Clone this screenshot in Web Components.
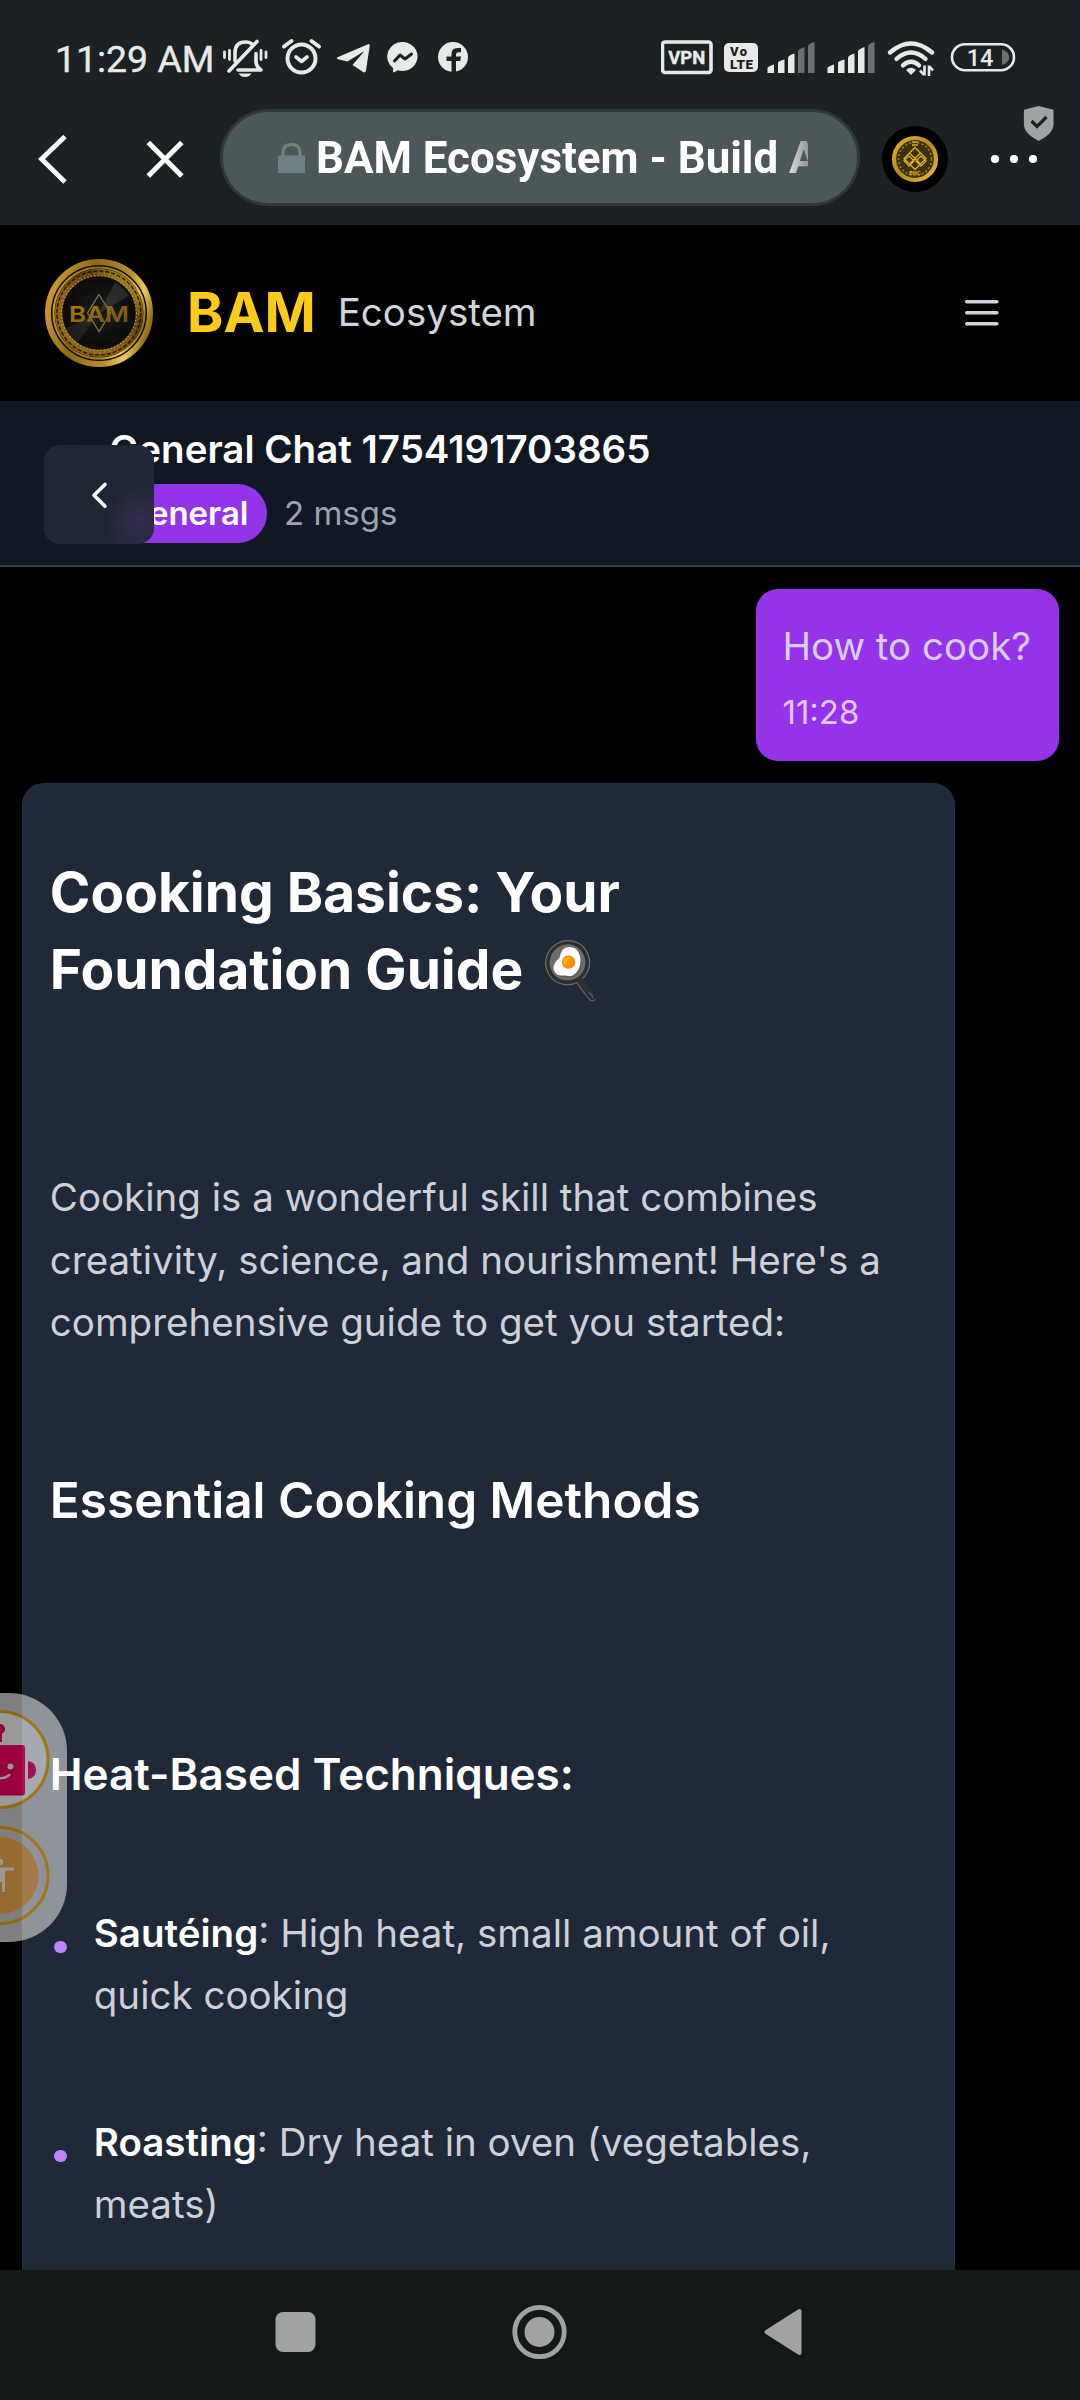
<!DOCTYPE html>
<html lang="en">
<head>
<meta charset="utf-8">
<title>BAM Ecosystem - Build AI</title>
<style>
html,body{margin:0;background:#000}
body{width:1080px;height:2400px;overflow:hidden;font-family:Inter,"Noto Sans",sans-serif}
</style>
</head>
<body>
<phone-screen></phone-screen>
<script>
const define=(name,html)=>customElements.define(name,class extends HTMLElement{
  constructor(){super();this.attachShadow({mode:'open'}).innerHTML=html;}
});

/* glyph art; the first value of each entry is the viewBox */
const ICONS={
bell:['222 28 54 56',`<g fill="none" stroke="#e8e9e9" stroke-width="3.6" stroke-linecap="round" stroke-linejoin="round"><path d="M235 61V53q0-11 10.500-11 5 0 7.500 3"/><path d="M229 71L257 41.500"/><path d="M238 70H261q-4.500-3-5-8V53.500"/><path d="M224.500 52v5.500M229.500 50.500v9M261 50.500v9M266 52v5.500" stroke-width="2.800"/></g><path d="M238.500 73.500h13q-2.500 3.500-6.500 3.500t-6.500-3.500z" fill="#e8e9e9"/>`],
alarm:['276 28 54 56',`<g fill="none" stroke="#e8e9e9" stroke-width="4" stroke-linecap="round"><circle cx="301.500" cy="58.500" r="14"/><path d="M284 46.500l7.500-5.500M311.500 41l7.500 5.500"/><path d="M296 57l5.500 4.500 5.500-4.500" stroke-linejoin="round" stroke-width="3.600"/></g>`],
telegram:['330 28 50 56',`<path d="M337 57.500L368 44.200q2-.6 1.700 1.800L366 70.500q-.7 3-3.300 1.300L352.500 65l12-14-17 10.500-9.500-2.300q-2-.8-1-1.700z" fill="#e8e9e9"/>`],
messenger:['380 28 50 56',`<path d="M403.300 42a15.200 14.500 0 1 1-5.500 28.300l-3.600 2q-1 .5-1-.8l-.1-3.500A15 14.500 0 0 1 403.300 42z" fill="#e8e9e9"/><path d="M394.500 61l5.500-6 5 4 6.500-5" fill="none" stroke="#1c2123" stroke-width="3" stroke-linejoin="round" stroke-linecap="round"/>`],
facebook:['430 28 231 56',`<circle cx="453" cy="57" r="15" fill="#e8e9e9"/><path d="M451.500 73V61h-5v-4.500h5V54q0-6 6-6h3.500v4.200h-2.500q-2.500 0-2.500 2.300v2h5l-.8 4.500H456V73z" fill="#1c2123"/>`],
vpn:['661 28 58 56',`<rect x="662.500" y="42" width="48.500" height="30.500" rx="2.500" fill="none" stroke="#e8e9e9" stroke-width="3.600"/><text x="686.800" y="63.500" text-anchor="middle" font-family="Roboto" font-weight="700" font-size="19" fill="#e8e9e9" stroke="#e8e9e9" stroke-width=".4" textLength="37" lengthAdjust="spacingAndGlyphs">VPN</text>`],
volte:['719 28 45 56',`<rect x="724" y="43" width="34" height="29" rx="5" fill="#e8e9e9"/><text x="730" y="55.800" font-family="Roboto" font-weight="900" font-size="13" fill="#1c2123" textLength="17">Vo</text><text x="730" y="69" font-family="Roboto" font-weight="900" font-size="13.500" fill="#1c2123" textLength="23">LTE</text>`],
signal3:['764 28 60 56',`<g fill="#e8e9e9"><path d="M767.500 73v-5q0-1.500 6.500-3.500v8.500z"/><path d="M778 73V62.500q1-1.500 6.500-3V73z"/><path d="M788 73V57.500q1-2.500 6.500-4V73z"/></g><g fill="#6c6f70"><path d="M798 73V51q1-2 6.500-4V73z"/><path d="M808 73V46q1-2.500 6.500-4V73z"/></g>`],
signal4:['824 28 60 56',`<g fill="#e8e9e9"><path d="M827.500 73v-5q0-1.500 6.500-3.500v8.500z"/><path d="M838 73V62.500q1-1.500 6.500-3V73z"/><path d="M848 73V57.500q1-2.500 6.500-4V73z"/><path d="M858 73V51q1-2 6.500-4V73z"/></g><g fill="#6c6f70"><path d="M868 73V46q1-2.500 6.500-4V73z"/></g>`],
wifi:['884 28 60 56',`<g fill="none" stroke="#e8e9e9" stroke-width="4.400" stroke-linecap="round"><path d="M890 52.500q21-18 42 0"/><path d="M896.500 58.800q14.500-12.500 29 0"/><path d="M903 65.300q8-7 16 0"/></g><path d="M906 70q5-4.500 10 0l-5 5z" fill="#e8e9e9"/><path d="M924.500 65.500v10M920 70.500l4 4.300M929 76V65.500M933 70.500l-3.500-4" stroke="#e8e9e9" stroke-width="2.600" fill="none"/>`],
battery:['944 28 80 56',`<rect x="952" y="44.200" width="62" height="26" rx="13" fill="none" stroke="#e8e9e9" stroke-width="2.600"/><path d="M1002 49.500q7 2 7 7.700t-7 7.700z" fill="#6c6f70"/><text x="980" y="66" text-anchor="middle" font-family="Roboto" font-weight="500" font-size="23.500" fill="#e8e9e9">14</text>`],
back:['20 96 107 129',`<path d="M65 136.500L41.500 159l23.500 23" fill="none" stroke="#fff" stroke-width="4.800"/>`],
close:['127 96 93 129',`<path d="M148.300 142.500l33.500 33.500M181.800 142.500l-33.500 33.500" stroke="#fff" stroke-width="5"/>`],
lock:['276 140 32 36',`<path d="M278 155.500h27v17.500h-27z" fill="#6f8183"/><path d="M283 156v-3q0-8.700 8.500-8.700t8.500 8.700v3" fill="none" stroke="#6f8183" stroke-width="3.200"/>`],
site:['880 124 70 70',`<defs><linearGradient id="g" x1="0" y1="0" x2="1" y2="1"><stop offset="0" stop-color="#e0b21c"/><stop offset=".5" stop-color="#b88a18"/><stop offset="1" stop-color="#e9b93f"/></linearGradient></defs><circle cx="915" cy="159" r="33" fill="#000"/><circle cx="915" cy="159" r="21" fill="#3a310c" stroke="url(#g)" stroke-width="4.200"/><circle cx="915" cy="159" r="16.500" fill="none" stroke="#a8841c" stroke-width="1.500" stroke-dasharray="2 2.200"/><g fill="none" stroke="#d9ae24" stroke-width="1.300"><path d="M915 147.500l11 11-11 11-11-11z"/><path d="M909.500 153l11 11M920.500 153l-11 11M904 160.500l5-4.500 5 5-5 5zM916 161l5-5 5 5-5 5z"/><path d="M912 145h6M912 142h6"/></g><text x="915" y="175" text-anchor="middle" font-family="Roboto" font-weight="700" font-size="6" fill="#d9ae24">BNC</text>`],
more:['986 96 94 129',`<g fill="#fff"><circle cx="995" cy="159" r="4.100"/><circle cx="1014" cy="159" r="4.100"/><circle cx="1033" cy="159" r="4.100"/></g><path d="M1038.700 106l14.800 3.800V125q0 8.500-14.800 16-14.800-7.500-14.800-16v-15.200z" fill="#a0a3a4"/><path d="M1031.500 121l5.500 5.500 9.500-9.500" fill="none" stroke="#1c2123" stroke-width="3.200"/>`],
menu:['960 290 44 46',`<path d="M966.800 301.800h30M966.800 312.800h30M966.800 323.800h30" stroke="#d1d5db" stroke-width="3.600" stroke-linecap="round"/>`],
chevron:['85 480 28 30',`<path d="M105 484.500L94 495.200l11 11" fill="none" stroke="#fff" stroke-width="3.600" stroke-linecap="round" stroke-linejoin="round"/>`],
recent:['265 2300 60 64',`<rect x="275.500" y="2312" width="40" height="40" rx="7.500" fill="#a0a3a2"/>`],
home:['510 2300 60 64',`<circle cx="539.500" cy="2332" r="24.700" fill="none" stroke="#a0a3a2" stroke-width="4.800"/><circle cx="539.500" cy="2332" r="15" fill="#a0a3a2"/>`],
navback:['755 2300 60 64',`<path d="M766.500 2332L799.500 2311v42z" fill="#a0a3a2" stroke="#a0a3a2" stroke-width="4" stroke-linejoin="round"/>`],
coin:['44 258 110 110',`<defs>
<linearGradient id="rim" x1="0" y1=".3" x2="1" y2=".6"><stop offset="0" stop-color="#c99a33"/><stop offset=".35" stop-color="#8d6b14"/><stop offset=".7" stop-color="#b98f2a"/><stop offset=".86" stop-color="#efc860"/><stop offset="1" stop-color="#927014"/></linearGradient>
<linearGradient id="mid" x1="0" y1="1" x2="1" y2="0"><stop offset="0" stop-color="#8a6c10"/><stop offset=".4" stop-color="#8b5a0c"/><stop offset=".7" stop-color="#5a3c08"/><stop offset="1" stop-color="#e2b416"/></linearGradient>
<linearGradient id="txt" x1="0" y1="0" x2="1" y2="1"><stop offset="0" stop-color="#b87e10"/><stop offset="1" stop-color="#6d5012"/></linearGradient>
<radialGradient id="disc"><stop offset="0" stop-color="#1b1b1b"/><stop offset="1" stop-color="#0d0c0a"/></radialGradient></defs>
<circle cx="99" cy="313" r="51" fill="#0e0b03" stroke="url(#rim)" stroke-width="6"/>
<circle cx="99" cy="313" r="45.500" fill="none" stroke="url(#rim)" stroke-width="2"/>
<circle cx="99" cy="313" r="40.500" fill="none" stroke="url(#mid)" stroke-width="7.500"/>
<circle cx="99" cy="313" r="39.500" fill="none" stroke="#9c9674" stroke-opacity=".75" stroke-width="1" stroke-dasharray="2 3"/>
<circle cx="99" cy="313" r="42" fill="none" stroke="#1a1303" stroke-width="1.300" stroke-dasharray="4 2"/>
<circle cx="99" cy="313" r="37.500" fill="none" stroke="#c9b05a" stroke-opacity=".7" stroke-width="1.400" stroke-dasharray="1.500 2"/>
<circle cx="99" cy="313" r="36" fill="url(#disc)"/>
<path d="M99 313L115 282q10 6 14 14z" fill="#fff" fill-opacity=".11"/><path d="M99 313L78 342q-8-6-12-14z" fill="#fff" fill-opacity=".07"/>
<path d="M99 294.500l11.500 18.500L99 331.500 87.500 313z" fill="none" stroke="#8d7547" stroke-width="1.200"/>
<text x="99" y="321.500" text-anchor="middle" font-family="Inter" font-weight="600" font-size="22" fill="url(#txt)" textLength="60" lengthAdjust="spacingAndGlyphs">BAM</text>`]
};
customElements.define('ui-icon',class extends HTMLElement{
  constructor(){super();this.attachShadow({mode:'open'});}
  connectedCallback(){
    const [box,art]=ICONS[this.getAttribute('name')];const [,,w,h]=box.split(' ');
    this.shadowRoot.innerHTML=`<style>:host{display:block;flex:none;width:${w}px;height:${h}px}svg{display:block}</style><svg width="${w}" height="${h}" viewBox="${box}">${art}</svg>`;
  }
});

define('status-bar',`<style>:host{display:flex;height:56px;padding:28px 0 12px 55px;background:#1c2123;color:#e8e9e9;font:400 37.4px/56px Roboto,sans-serif}
.t{width:167px;white-space:nowrap;padding-top:3px;box-sizing:border-box;height:56px;-webkit-text-stroke:.4px #e8e9e9}</style>
<div class="t">11:29 AM</div>${['bell','alarm','telegram','messenger','facebook','vpn','volte','signal3','signal4','wifi','battery'].map(n=>`<ui-icon name="${n}"></ui-icon>`).join('')}`);

define('browser-bar',`<style>:host{display:flex;height:129px;padding-left:20px;background:#1c2123;font-family:Roboto,sans-serif}
.pill{box-sizing:border-box;width:640px;height:97px;margin-top:13px;border:3px solid #2d393b;border-radius:49px;background:#4c5759;display:flex;align-items:center;padding-left:53px}
.title{width:492px;margin-left:8px;overflow:hidden;white-space:nowrap;color:#fff;font-weight:700;font-size:43.9px;line-height:60px;-webkit-mask-image:linear-gradient(90deg,#000 94%,transparent 104%);mask-image:linear-gradient(90deg,#000 94%,transparent 104%)}
.site{margin:28px 36px 0 20px}</style>
<ui-icon name="back"></ui-icon><ui-icon name="close"></ui-icon>
<div class="pill"><ui-icon name="lock"></ui-icon><div class="title"><slot></slot></div></div>
<ui-icon class="site" name="site"></ui-icon><ui-icon name="more"></ui-icon>`);

define('site-header',`<style>:host{display:flex;box-sizing:border-box;height:176px;padding:0 76px 0 44px;align-items:center;background:#000}
.b{color:#facc15;font-weight:700;font-size:55px;line-height:77px;margin:0 0 2px 33px}
.e{color:#d1d5db;font-size:38.5px;line-height:55px;margin:0 0 1px 22px}.m{margin-left:auto}</style>
<ui-icon name="coin"></ui-icon><span class="b">BAM</span><span class="e">Ecosystem</span><ui-icon class="m" name="menu"></ui-icon>`);

define('back-button',`<style>:host{box-sizing:border-box;width:110px;height:99px;border-radius:16px;background:radial-gradient(circle at 96px 76px,#342d4d 0,rgba(52,45,77,0) 36px),linear-gradient(100deg,#202833,#1e2633 60%,#222938);display:flex;align-items:center;justify-content:center}</style><ui-icon name="chevron"></ui-icon>`);

define('chat-header',`<style>:host{display:block;position:relative;box-sizing:border-box;height:166px;padding:21px 0 0 109.500px;background:#111824;border-bottom:2px solid #374151}
.h{color:#fff;font-weight:600;font-size:38.5px;line-height:55px;white-space:nowrap}
.r{display:flex;align-items:center;margin-top:7px;gap:17px}
.badge{box-sizing:border-box;height:59px;border-radius:30px;background:#9333ea;color:#fff;font-weight:600;font-size:33px;line-height:59px;padding:0 18.500px;width:157.500px;display:flex;justify-content:flex-end}
.n{color:#9ca3af;font-size:33px;line-height:59px}
back-button{position:absolute;left:44px;top:44px}</style>
<div class="h">General Chat 1754191703865</div><div class="r"><span class="badge">General</span><span class="n">2 msgs</span></div><back-button></back-button>`);

define('user-bubble',`<style>:host{display:block;box-sizing:border-box;width:303.500px;height:172px;margin:22px 21px 22px auto;padding:26px 0 0 27px;border-radius:22px;background:#9333ea;color:#d9cdf0;font-size:38.5px;line-height:62.500px;white-space:nowrap}
.t{font-size:33px;line-height:44px;color:#e5c8fd;margin-top:12px}</style><slot></slot><div class="t"><slot name="time"></slot></div>`);

define('step-item',`<style>:host{display:grid;grid-template-columns:44px 1fr;height:209px;font-size:38.5px;line-height:62.560px;color:#ccd0d8}
i{width:12.500px;height:12.500px;border-radius:50%;background:#c084fc;margin:39px 0 0 4.500px}::slotted(b){color:#fff;font-weight:600}</style><i></i><div><slot></slot></div>`);

define('answer-card',`<style>:host{display:block;box-sizing:border-box;width:932.500px;height:1487px;margin-left:22px;padding:70px 26px 0 26.800px;border:1px solid #243040;border-bottom:0;border-radius:22px 22px 0 0;background:#202937;color:#ccd0d8;font-size:38.5px;line-height:62.560px;overflow:hidden}
h1,h2,h3,p{margin:0}h1,h2,h3{color:#fff}
h1{font-size:55px;line-height:77px;font-weight:700;height:154px}
p{margin-top:158.200px;height:187.300px;white-space:nowrap}
h2{font-size:49.500px;line-height:69px;font-weight:600;margin-top:112.500px}
h3{font-size:44px;line-height:62px;font-weight:600;margin-top:208px}
.l{margin-top:96.700px}</style>
<h1>Cooking Basics: Your<br>Foundation Guide 🍳</h1>
<p>Cooking is a wonderful skill that combines<br>creativity, science, and nourishment! Here's a<br>comprehensive guide to get you started:</p>
<h2>Essential Cooking Methods</h2>
<h3>Heat-Based Techniques:</h3>
<div class="l"><step-item><b>Sautéing</b>: High heat, small amount of oil,<br>quick cooking</step-item>
<step-item><b>Roasting</b>: Dry heat in oven (vegetables,<br>meats)</step-item></div>`);

define('side-widget',`<style>:host{display:block;width:66.500px;height:248.500px;border-radius:0 58px 58px 0;overflow:hidden;background:rgba(255,255,255,.83);opacity:.6}svg{display:block}</style>
<svg width="67" height="249" viewBox="0 1693 67 249"><circle cx="0" cy="1759.500" r="48" fill="#fff" stroke="#eeae12" stroke-width="3.200"/>
<g fill="#ff0064"><rect x="-28" y="1745" width="53" height="50.500" rx="3"/><path d="M28 1761q8 1 8 9t-8 9z"/><circle cx="0" cy="1729" r="5"/><path d="M-2 1729h4v13h-4z"/></g>
<circle cx="10.500" cy="1766.500" r="3" fill="#fff"/><path d="M-9 1774q9 8 18.500 1" fill="none" stroke="#fff" stroke-width="2.200" stroke-linecap="round"/>
<circle cx="0" cy="1875.500" r="48" fill="none" stroke="#eeae12" stroke-width="3.200"/><circle cx="0" cy="1875.500" r="38.500" fill="#fcb250"/>
<circle cx="0" cy="1862" r="3.300" fill="#fff"/><path d="M-14 1867.500h28v3H5V1892H2v-10h-4v10h-3v-21.500h-9z" fill="#fff"/></svg>`);

define('nav-bar',`<style>:host{display:flex;box-sizing:border-box;height:130px;padding:30px 265px 0;justify-content:space-between;background:#131918}</style><ui-icon name="recent"></ui-icon><ui-icon name="home"></ui-icon><ui-icon name="navback"></ui-icon>`);

define('phone-screen',`<style>:host{display:flex;flex-direction:column;position:relative;width:1080px;height:2400px;overflow:hidden;background:#000}
:host>*{flex:none}side-widget{position:absolute;left:0;top:1693px}</style>
<status-bar></status-bar><browser-bar>BAM Ecosystem - Build AI</browser-bar>
<site-header></site-header><chat-header></chat-header>
<user-bubble>How to cook?<span slot="time">11:28</span></user-bubble>
<answer-card></answer-card><nav-bar></nav-bar><side-widget></side-widget>`);
</script>
</body>
</html>
